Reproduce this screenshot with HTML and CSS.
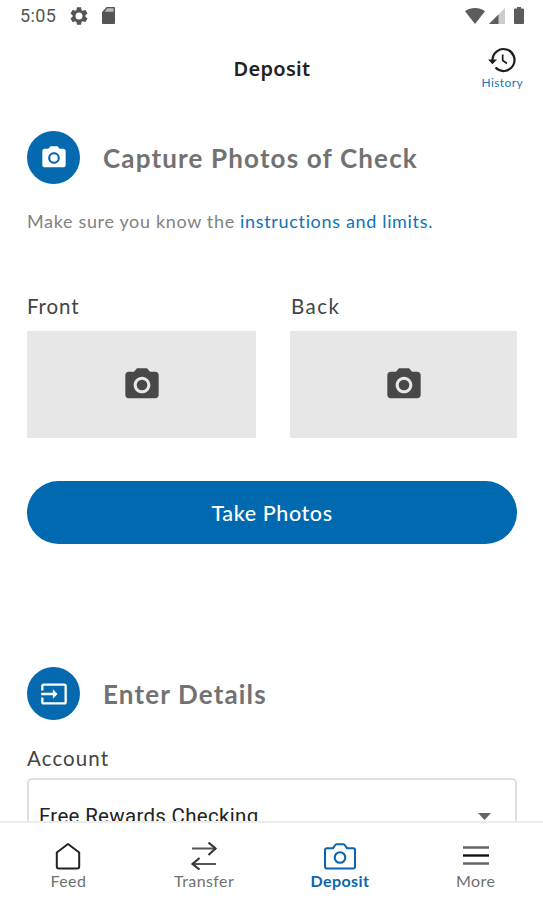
FILE: index.html
```html
<!DOCTYPE html>
<html lang="en">
<head>
    <meta charset="UTF-8">
    <meta name="viewport" content="width=device-width, initial-scale=1.0">
    <title>Deposit</title>
    <link rel="stylesheet" href="styles.css">
</head>
<body>
    <div class="status-bar">
        <span class="time">5:05</span>
        <svg class="gear" width="18" height="18" viewBox="2 2 20 20" fill="#555"><path d="M19.14 12.94c.04-.3.06-.61.06-.94s-.02-.64-.07-.94l2.03-1.58c.18-.14.23-.41.12-.61l-1.92-3.32c-.12-.22-.37-.29-.59-.22l-2.39.96c-.5-.38-1.03-.7-1.62-.94L14.4 2.81c-.04-.24-.24-.41-.48-.41h-3.84c-.24 0-.43.17-.47.41l-.36 2.54c-.59.24-1.13.57-1.62.94l-2.39-.96c-.22-.08-.47 0-.59.22L2.74 8.87c-.12.21-.08.47.12.61l2.03 1.58c-.05.3-.09.63-.09.94s.02.64.07.94l-2.03 1.58c-.18.14-.23.41-.12.61l1.92 3.32c.12.22.37.29.59.22l2.39-.96c.5.38 1.03.7 1.62.94l.36 2.54c.05.24.24.41.48.41h3.84c.24 0 .44-.17.47-.41l.36-2.54c.59-.24 1.13-.56 1.62-.94l2.39.96c.22.08.47 0 .59-.22l1.92-3.32c.12-.22.07-.47-.12-.61l-2.01-1.58zM12 15.9a3.9 3.9 0 1 1 0-7.8 3.9 3.9 0 0 1 0 7.8z"/></svg>
        <svg class="card" width="13" height="17" viewBox="0 0 14 17" preserveAspectRatio="none"><path fill="#555" d="M5 0h8a1 1 0 0 1 1 1v15a1 1 0 0 1-1 1H1a1 1 0 0 1-1-1V5z"/><path fill="#bbb" d="M5.5 1.3h7v3.4H3z"/></svg>
        <div class="signals">
            <svg width="20" height="16" viewBox="0 0 20 16"><path fill="#5c5c5c" d="M0 3.2C6-1 14-1 20 3.2L10 16z"/></svg>
            <svg width="16" height="16" viewBox="0 0 16 16"><path fill="#ccc" d="M16 0v16H0z"/><path fill="#5c5c5c" d="M9.5 6.5V16H0z"/></svg>
            <svg width="10" height="17" viewBox="0 0 10 17"><path fill="#5c5c5c" d="M3 0h4v1.6h2a1 1 0 0 1 1 1V16a1 1 0 0 1-1 1H1a1 1 0 0 1-1-1V2.6a1 1 0 0 1 1-1h2z"/></svg>
        </div>
    </div>

    <header class="header">
        <h1>Deposit</h1>
        <a class="history">
            <svg width="28" height="26" viewBox="0 0 28 26"><path d="M4.5 13a11 11 0 1 1 3 7.6" fill="none" stroke="#1c1c1c" stroke-width="2.2"/><path d="M0 12.5h9l-4.5 4.7z" fill="#1c1c1c"/><path d="M14.7 7.5v6l4.3 3" fill="none" stroke="#1c1c1c" stroke-width="1.7"/></svg>
            <span>History</span>
        </a>
    </header>

    <main class="content">
        <div class="section-title">
            <div class="badge">
                <svg width="28" height="28" viewBox="0 0 24 24" fill="#fff"><circle cx="12" cy="12" r="3.2"/><path d="M9 2L7.17 4H4c-1.1 0-2 .9-2 2v12c0 1.1.9 2 2 2h16c1.1 0 2-.9 2-2V6c0-1.1-.9-2-2-2h-3.17L15 2H9zm3 15c-2.76 0-5-2.24-5-5s2.24-5 5-5 5 2.24 5 5-2.24 5-5 5z"/></svg>
            </div>
            <h2>Capture Photos of Check</h2>
        </div>
        <p class="note">Make sure you know the <a>instructions and limits.</a></p>

        <div class="photos">
            <div>
                <div class="label">Front</div>
                <div class="photo">
                    <svg width="40" height="40" viewBox="0 0 24 24" fill="#484848"><circle cx="12" cy="12" r="3.2"/><path d="M9 2L7.17 4H4c-1.1 0-2 .9-2 2v12c0 1.1.9 2 2 2h16c1.1 0 2-.9 2-2V6c0-1.1-.9-2-2-2h-3.17L15 2H9zm3 15c-2.76 0-5-2.24-5-5s2.24-5 5-5 5 2.24 5 5-2.24 5-5 5z"/></svg>
                </div>
            </div>
            <div>
                <div class="label back">Back</div>
                <div class="photo">
                    <svg width="40" height="40" viewBox="0 0 24 24" fill="#484848"><circle cx="12" cy="12" r="3.2"/><path d="M9 2L7.17 4H4c-1.1 0-2 .9-2 2v12c0 1.1.9 2 2 2h16c1.1 0 2-.9 2-2V6c0-1.1-.9-2-2-2h-3.17L15 2H9zm3 15c-2.76 0-5-2.24-5-5s2.24-5 5-5 5 2.24 5 5-2.24 5-5 5z"/></svg>
                </div>
            </div>
        </div>

        <button class="take-photos" type="button">Take Photos</button>

        <div class="section-title">
            <div class="badge">
                <svg width="28" height="28" viewBox="0 0 24 24" fill="#fff"><path d="M21 3.01H3c-1.1 0-2 .9-2 2V9h2V4.99h18v14.03H3V15H1v4.01c0 1.1.9 1.98 2 1.98h18c1.1 0 2-.88 2-1.98v-14c0-1.11-.9-2-2-2zM11 16l4-4-4-4v3H1v2h10v3z"/></svg>
            </div>
            <h2>Enter Details</h2>
        </div>
        <div class="label account">Account</div>
        <div class="select">
            <span>Free Rewards Checking</span>
            <svg width="13" height="7" viewBox="0 0 13 7"><path d="M0 0h13L6.5 7z" fill="#666"/></svg>
        </div>
    </main>

    <nav class="tabs">
        <a class="tab">
            <svg width="28" height="28" viewBox="0 0 28 28" fill="none" stroke="#222" stroke-width="2" stroke-linejoin="round"><path d="M14 2L2.8 10.5V24.5a2 2 0 0 0 2 2H23.2a2 2 0 0 0 2-2V10.5z"/></svg>
            <span>Feed</span>
        </a>
        <a class="tab">
            <svg width="28" height="28" viewBox="0 0 28 28" fill="none" stroke="#333" stroke-width="2.1"><path d="M2 6.5h24M2 22h24" stroke="#555"/><path d="M18.5 .5L25.500 6.500l-7 6.500M9.500 16l-7 6 7 5.500"/></svg>
            <span>Transfer</span>
        </a>
        <a class="tab active">
            <svg width="34" height="28" viewBox="0 0 34 28" fill="none" stroke="#0a65ad" stroke-width="2.1" stroke-linejoin="round"><path d="M4 6.2h5.2c2.8 0 1.8-4 4.3-4h7c2.5 0 1.5 4 4.3 4H30a2 2 0 0 1 2 2V24.5a2 2 0 0 1-2 2H4a2 2 0 0 1-2-2V8.2a2 2 0 0 1 2-2z"/><circle cx="17" cy="15.5" r="5.3"/></svg>
            <span>Deposit</span>
        </a>
        <a class="tab">
            <svg width="28" height="28" viewBox="0 0 28 28" fill="none" stroke-width="2.4"><path d="M1 5.500h26M1 21.500h26" stroke="#666"/><path d="M1 13.500h26" stroke="#111"/></svg>
            <span>More</span>
        </a>
    </nav>
</body>
</html>
```
FILE: styles.css
```css
* {
    box-sizing: border-box;
}
body {
    display: flex;
    flex-direction: column;
    height: 900px;
    margin: 0;
    overflow: hidden;
    background-color: #fff;
    font-family: Lato, sans-serif;
    color: #333;
}
h1, h2, p {
    margin: 0;
}
svg {
    display: block;
    flex-shrink: 0;
}
.status-bar {
    display: flex;
    align-items: center;
    height: 31px;
    padding: 0 19px 0 20px;
}
.time {
    width: 36px;
    font-family: Roboto, sans-serif;
    font-size: 18px;
    letter-spacing: 0.4px;
    color: #555;
}
.gear {
    margin-left: 14px;
}
.card {
    margin-left: 14px;
}
.signals {
    display: flex;
    align-items: center;
    gap: 9px;
    margin-left: auto;
}
.signals svg:first-child {
    margin-right: -5px;
}
.header {
    display: grid;
    grid-template-columns: 1fr auto 1fr;
    align-items: center;
    height: 74px;
    padding: 0 20px;
}
.header h1 {
    grid-column: 2;
    padding-left: 1px;
    font-family: "Noto Sans", sans-serif;
    font-size: 20px;
    font-weight: 600;
    letter-spacing: 0.3px;
    color: #222;
}
.history {
    display: flex;
    flex-direction: column;
    align-items: center;
    justify-self: end;
    gap: 3px;
    font-size: 12px;
    line-height: 14px;
    letter-spacing: 0.4px;
    color: #1874b8;
}
.content {
    flex: 1;
    min-height: 0;
    padding: 26px 26px 0 27px;
    overflow: hidden;
}
.section-title {
    display: flex;
    align-items: center;
    gap: 23px;
    height: 53px;
}
.section-title h2 {
    font-size: 26px;
    font-weight: bold;
    letter-spacing: 1.15px;
    color: #727272;
}
.badge {
    display: flex;
    align-items: center;
    justify-content: center;
    width: 53px;
    height: 53px;
    border-radius: 50%;
    background-color: #0569af;
}
.note {
    margin-top: 25px;
    font-size: 18px;
    line-height: 24px;
    letter-spacing: 0.66px;
    color: #828282;
}
.note a {
    color: #1272b5;
}
.label {
    font-size: 20.5px;
    line-height: 26px;
    letter-spacing: 0.9px;
    color: #444;
}
.back {
    padding-left: 1px;
    letter-spacing: 1.5px;
}
.photos {
    display: grid;
    grid-template-columns: 229px 227px;
    gap: 34px;
    margin-top: 60px;
}
.photo {
    display: flex;
    align-items: center;
    justify-content: center;
    height: 107px;
    margin-top: 12px;
    background-color: #e7e7e7;
}
.take-photos {
    display: block;
    width: 100%;
    height: 63px;
    margin: 43px 0 123px;
    border: none;
    border-radius: 32px;
    background-color: #0069af;
    color: #fff;
    font-family: Lato, sans-serif;
    font-size: 21.5px;
    font-weight: 500;
    letter-spacing: 0.6px;
}
.account {
    margin-top: 25px;
    letter-spacing: 1.1px;
}
.select {
    display: flex;
    align-items: center;
    justify-content: space-between;
    height: 76px;
    margin-top: 7px;
    padding: 0 24px 0 10px;
    border: 2px solid #e0e0e0;
    border-radius: 5px;
    font-family: Roboto, sans-serif;
    font-size: 20.5px;
    letter-spacing: 0.3px;
    color: #222;
}
.tabs {
    display: grid;
    grid-template-columns: repeat(4, 1fr);
    height: 79px;
    border-top: 2px solid #ececec;
    background-color: #fff;
}
.tab {
    display: flex;
    flex-direction: column;
    align-items: center;
    justify-content: space-between;
    height: 68px;
    padding: 19px 0 0 1px;
    font-size: 16px;
    line-height: 20px;
    letter-spacing: 0.4px;
    color: #707070;
}
.active {
    font-weight: bold;
    color: #0a65ad;
}
```
